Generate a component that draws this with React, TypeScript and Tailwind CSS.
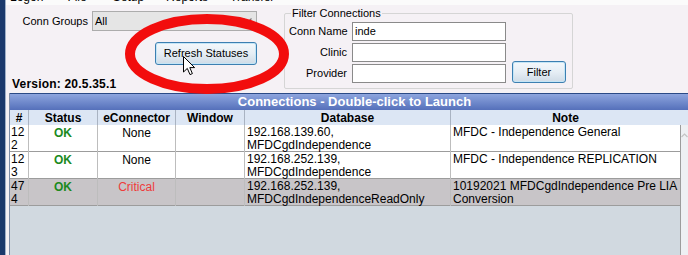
import type { ReactNode } from "react";

const cols = "grid grid-cols-[19px_69px_78px_69px_206px_229px]";

type Row = { id: [string, string]; status: string; ec: string; critical?: boolean; db: [string, string]; note: ReactNode; selected?: boolean };

const rows: Row[] = [
  { id: ["12", "2"], status: "OK", ec: "None", db: ["192.168.139.60,", "MFDCgdIndependence"], note: "MFDC - Independence General" },
  { id: ["12", "3"], status: "OK", ec: "None", db: ["192.168.252.139,", "MFDCgdIndependence"], note: "MFDC - Independence REPLICATION" },
  {
    id: ["47", "4"],
    status: "OK",
    ec: "Critical",
    critical: true,
    db: ["192.168.252.139,", "MFDCgdIndependenceReadOnly"],
    note: (
      <>
        10192021 MFDCgdIndependence Pre LIA
        <br />
        Conversion
      </>
    ),
    selected: true,
  },
];

function WinButton({ children, className }: { children: ReactNode; className: string }) {
  return (
    <button className={`flex items-center justify-center whitespace-nowrap rounded-[3px] border border-[#3c7fb1] bg-gradient-to-b from-[#f4f8fb] via-[#e6eef5] to-[#cfdbe6] text-[11px] text-black shadow-[inset_0_0_0_1px_#c4e5f6] ${className}`}>
      {children}
    </button>
  );
}

function TextBox({ value = "" }: { value?: string }) {
  return (
    <div className="flex h-[19px] w-[154px] items-center border border-[#8a8a8a] bg-white pl-[2px] text-[11px] leading-none text-black">
      {value}
    </div>
  );
}

export default function App() {
  return (
    <div className="relative flex h-[255px] w-[688px] overflow-hidden bg-[#f5f1f5] font-['Liberation_Sans',Arial,sans-serif] text-[12px] text-black">
      <div className="w-[5px] shrink-0 bg-[#1b396c]" />
      <div className="w-px shrink-0 bg-[#9fb0c8]" />

      <div className="flex min-w-0 flex-1 flex-col">
        {/* menu bar, cut off at the top */}
        <div className="h-[5px] overflow-hidden bg-[#fbfbfb]">
          <div className="mt-[-9px] flex gap-[22px] pl-[4px] text-[12px] leading-[13px]">
            <span>Logon</span>
            <span className="ml-[2px]">File</span>
            <span className="ml-[4px]">Setup</span>
            <span>Reports</span>
            <span>Transfer</span>
          </div>
        </div>

        {/* top form */}
        <div className="flex h-[88px] text-[11px]">
          <div className="flex w-[278px] shrink-0 flex-col">
            <div className="mt-[6px] flex items-center">
              <span className="w-[86px] whitespace-nowrap pr-[4px] text-right">Conn Groups</span>
              <div className="flex h-[20px] w-[165px] items-center justify-between border border-[#acacac] bg-[#e5e5e5] pl-[2px] pr-[4px]">
                <span>All</span>
                <svg width="9" height="6" viewBox="0 0 9 6" className="text-[#7a7a7a]">
                  <path d="M0.5 0.5 L4.5 4.5 L8.5 0.5" fill="none" stroke="currentColor" strokeWidth="1.2" />
                </svg>
              </div>
            </div>
            <WinButton className="ml-[149px] mt-[11px] h-[23px] w-[102px]">Refresh Statuses</WinButton>
            <div className="ml-[6px] mt-[12px] text-[12px] font-bold leading-[14px] tracking-[0.2px]">Version: 20.5.35.1</div>
          </div>

          <div className="relative mt-[8px] flex h-[76px] w-[289px] items-start rounded-[2px] border border-[#d5d5d5] pl-[4px] pt-[8px]">
            <span className="absolute left-[6px] top-[-8px] whitespace-nowrap bg-[#f5f1f5] px-[1px] leading-[14px]">Filter Connections</span>
            <div className="grid grid-cols-[58px_154px] items-center gap-x-[5px] gap-y-[2px]">
              <span className="whitespace-nowrap text-right">Conn Name</span>
              <TextBox value="inde" />
              <span className="text-right">Clinic</span>
              <TextBox />
              <span className="text-right">Provider</span>
              <TextBox />
            </div>
            <WinButton className="ml-[6px] mt-[39px] h-[22px] w-[54px]">Filter</WinButton>
          </div>
        </div>

        {/* connections grid */}
        <div className="ml-[3px] flex min-h-0 flex-1 flex-col border-l border-[#7f8ea8]">
          <div className="flex h-[17px] items-center justify-center border-t border-[#2b4a86] bg-gradient-to-b from-[#8ea5de] to-[#5570ba] pl-[11px] text-[13px] font-bold text-white">
            Connections - Double-click to Launch
          </div>
          <div className="flex h-[15px] items-center bg-[#dce6f4] text-[12px] font-bold">
            <div className={cols}>
              {["#", "Status", "eConnector", "Window", "Database", "Note"].map((h, i) => (
                <div key={h} className={`flex h-[15px] items-center justify-center ${i < 5 ? "border-r border-[#a9b3c2]" : ""}`}>
                  {h}
                </div>
              ))}
            </div>
          </div>

          <div className="flex min-h-0 flex-1">
            <div className="flex w-[670px] flex-col bg-[#d1d9e0]">
              {rows.map((r, i) => (
                <div key={i} className={`${cols} h-[27px] border-b border-[#9c9c9c] ${r.selected ? "bg-[#c8c5c8]" : "bg-white"} leading-[13px]`}>
                  <div className="border-r border-[#bdbdbd] pl-px pt-px">
                    {r.id[0]}
                    <br />
                    {r.id[1]}
                  </div>
                  <div className="border-r border-[#bdbdbd] pt-[2px] text-center text-[12px] font-bold text-[#1d8a1d]">{r.status}</div>
                  <div className={`border-r border-[#bdbdbd] pt-[2px] text-center ${r.critical ? "text-[#ee3b3b]" : ""}`}>{r.ec}</div>
                  <div className="border-r border-[#bdbdbd]" />
                  <div className="border-r border-[#bdbdbd] pl-[2px] pt-px">
                    {r.db[0]}
                    <br />
                    {r.db[1]}
                  </div>
                  <div className="pl-[2px] pt-px">{r.note}</div>
                </div>
              ))}
            </div>
            <div className="flex w-[9px] justify-center border-l border-[#9c9c9c] bg-[#eef0f3] pt-[8px]">
              <svg width="7" height="5" viewBox="0 0 7 5" className="text-[#c4c4c4]">
                <path d="M0.5 4 L3.5 1 L6.5 4" fill="none" stroke="currentColor" strokeWidth="1.2" />
              </svg>
            </div>
          </div>
        </div>
      </div>

      {/* red annotation ring */}
      <svg className="pointer-events-none absolute left-0 top-0" width="688" height="255">
        <ellipse cx="207" cy="54" rx="77" ry="35" fill="none" stroke="#f20d0d" strokeWidth="10" />
      </svg>

      {/* mouse pointer */}
      <svg className="pointer-events-none absolute left-[183px] top-[56px]" width="13" height="20" viewBox="0 0 13 20">
        <path d="M0.5 0.5 L0.5 16 L4.3 12.4 L7 18.6 L9.4 17.6 L6.8 11.6 L11.6 11.6 Z" fill="white" stroke="black" strokeWidth="1" strokeLinejoin="round" />
      </svg>
    </div>
  );
}
